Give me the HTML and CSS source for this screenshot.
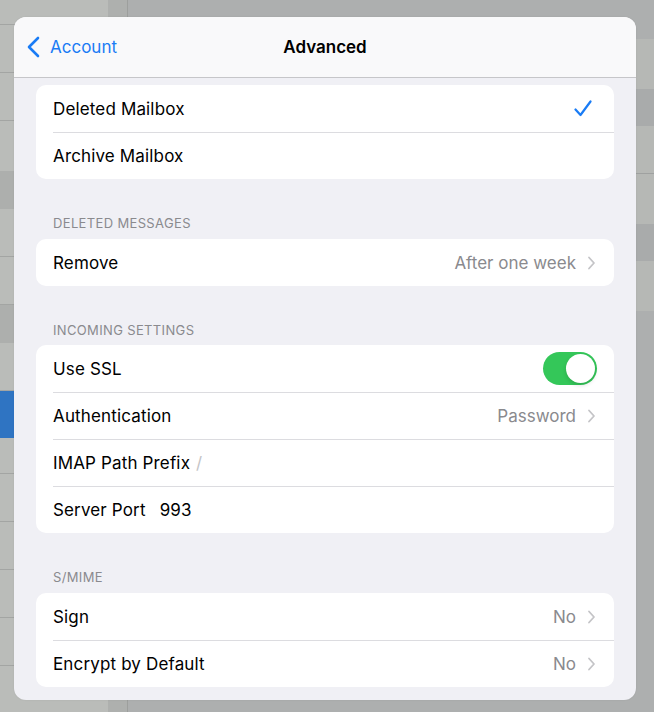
FILE: index.html
```html
<!DOCTYPE html>
<html lang="en">
<head>
    <meta charset="UTF-8">
    <meta name="viewport" content="width=device-width, initial-scale=1.0">
    <title>Advanced</title>
    <link rel="stylesheet" href="styles.css">
</head>
<body>
    <!-- dimmed app behind the sheet -->
    <div class="backdrop">
        <div class="sidebar">
            <div class="side-row top"></div>
            <div class="side-row"></div>
            <div class="side-row"></div>
            <div class="side-row tall"></div>
            <div class="side-row dark"></div>
            <div class="side-row"></div>
            <div class="side-row"></div>
            <div class="side-row dark"></div>
            <div class="side-row"></div>
            <div class="side-row selected"></div>
            <div class="side-row short"></div>
            <div class="side-row"></div>
            <div class="side-row"></div>
            <div class="side-row"></div>
            <div class="side-row"></div>
        </div>
        <div class="gutter"></div>
        <div class="main">
            <div class="main-row gap"></div>
            <div class="main-row light"></div>
            <div class="main-row dim"></div>
            <div class="main-row light split"></div>
            <div class="main-row light"></div>
            <div class="main-row dim"></div>
            <div class="main-row light"></div>
        </div>
    </div>

    <div class="sheet">
        <div class="nav">
            <a class="back">
                <svg width="14" height="22" viewBox="0 0 14 22">
                    <polyline points="11,2 2,11 11,20" fill="none" stroke="#1a7cf5" stroke-width="2.6" stroke-linecap="round" stroke-linejoin="round"/>
                </svg>
                <span>Account</span>
            </a>
            <div class="nav-title">Advanced</div>
        </div>

        <div class="content">
            <div class="group">
                <div class="row"><div class="row-inner">
                    <span class="label">Deleted Mailbox</span>
                    <svg class="check" width="18" height="18" viewBox="0 0 18 18">
                        <polyline points="1.5,9.5 6.5,15 16.5,1.5" fill="none" stroke="#1a7cf5" stroke-width="2.2" stroke-linecap="round" stroke-linejoin="round"/>
                    </svg>
                </div></div>
                <div class="row"><div class="row-inner">
                    <span class="label">Archive Mailbox</span>
                </div></div>
            </div>

            <div class="section-header">Deleted Messages</div>
            <div class="group">
                <div class="row"><div class="row-inner">
                    <span class="label">Remove</span>
                    <span class="value">After one week</span>
                    <svg class="chevron" width="9" height="14" viewBox="0 0 9 14">
                        <polyline points="2,1.5 7,7 2,12.5" fill="none" stroke="#c4c4c7" stroke-width="1.8" stroke-linecap="round" stroke-linejoin="round"/>
                    </svg>
                </div></div>
            </div>

            <div class="section-header tight">Incoming Settings</div>
            <div class="group">
                <div class="row"><div class="row-inner">
                    <span class="label">Use SSL</span>
                    <span class="toggle on"><span class="knob"></span></span>
                </div></div>
                <div class="row"><div class="row-inner">
                    <span class="label">Authentication</span>
                    <span class="value">Password</span>
                    <svg class="chevron" width="9" height="14" viewBox="0 0 9 14">
                        <polyline points="2,1.5 7,7 2,12.5" fill="none" stroke="#c4c4c7" stroke-width="1.8" stroke-linecap="round" stroke-linejoin="round"/>
                    </svg>
                </div></div>
                <div class="row"><div class="row-inner">
                    <span class="label">IMAP Path Prefix</span>
                    <span class="field placeholder">/</span>
                </div></div>
                <div class="row"><div class="row-inner">
                    <span class="label">Server Port</span>
                    <span class="field port">993</span>
                </div></div>
            </div>

            <div class="section-header">S/MIME</div>
            <div class="group">
                <div class="row"><div class="row-inner">
                    <span class="label">Sign</span>
                    <span class="value">No</span>
                    <svg class="chevron" width="9" height="14" viewBox="0 0 9 14">
                        <polyline points="2,1.5 7,7 2,12.5" fill="none" stroke="#c4c4c7" stroke-width="1.8" stroke-linecap="round" stroke-linejoin="round"/>
                    </svg>
                </div></div>
                <div class="row"><div class="row-inner">
                    <span class="label">Encrypt by Default</span>
                    <span class="value">No</span>
                    <svg class="chevron" width="9" height="14" viewBox="0 0 9 14">
                        <polyline points="2,1.5 7,7 2,12.5" fill="none" stroke="#c4c4c7" stroke-width="1.8" stroke-linecap="round" stroke-linejoin="round"/>
                    </svg>
                </div></div>
            </div>
        </div>
    </div>
</body>
</html>
```

FILE: styles.css
```css
* {
    margin: 0;
    padding: 0;
    box-sizing: border-box;
}

body {
    font-family: 'Inter', 'Roboto', sans-serif;
    background: #adafaf;
    width: 654px;
    height: 712px;
    overflow: hidden;
    position: relative;
    color: #000;
}

/* backdrop */
.backdrop {
    display: flex;
    height: 712px;
}

.sidebar {
    width: 108px;
    background: #babcb9;
    display: flex;
    flex-direction: column;
}

.side-row {
    height: 48px;
    border-bottom: 1px solid #a3a5a3;
}

.side-row.top {
    height: 25px;
}

.side-row.tall {
    height: 50px;
    border-bottom: none;
}

.side-row.dark {
    height: 38px;
    background: #adafad;
    border-bottom: none;
}

.side-row.short {
    height: 36px;
}

.side-row.selected {
    height: 47px;
    background: #2f74c2;
    border-bottom: none;
}

.gutter {
    width: 20px;
    background: #aeb0ae;
    border-right: 1px solid #9d9f9d;
}

.main {
    flex: 1;
    display: flex;
    flex-direction: column;
}

.main-row {
    height: 40px;
}

.main-row.gap {
    height: 39px;
}

.main-row.light {
    height: 50px;
    background: #b6b8b5;
}

.main-row.dim {
    height: 37px;
    background: #a9abab;
}

.main-row.split {
    height: 48px;
    border-bottom: 1px solid #9fa1a0;
}

/* sheet */
.sheet {
    position: absolute;
    left: 14px;
    top: 17px;
    width: 622px;
    background: #f0f0f5;
    border-radius: 12px;
    overflow: hidden;
    box-shadow: 0 0 2px rgba(0,0,0,0.08);
}

.nav {
    height: 61px;
    background: #f9f9fa;
    border-bottom: 1px solid #c6c6c9;
    display: flex;
    align-items: center;
    justify-content: center;
    position: relative;
}

.back {
    position: absolute;
    left: 13px;
    top: 19px;
    display: flex;
    align-items: center;
    gap: 9px;
    color: #1a7cf5;
    font-size: 17px;
    letter-spacing: 0;
}

.nav-title {
    font-size: 17px;
    font-weight: 600;
    letter-spacing: 0;
}

.content {
    padding: 7px 22px 13px;
}

.section-header {
    padding: 35px 17px 7px;
    height: 60px;
    font-size: 13px;
    line-height: 18px;
    text-transform: uppercase;
    color: #8a8a8e;
    letter-spacing: 0.35px;
}

.section-header.tight {
    height: 59px;
    padding-bottom: 6px;
}

.group {
    background: #fff;
    border-radius: 10px;
    overflow: hidden;
}

.row {
    padding-left: 17px;
}

.row-inner {
    height: 47px;
    display: flex;
    align-items: center;
    padding-right: 18px;
    font-size: 17px;
    letter-spacing: 0.15px;
}

.row + .row .row-inner {
    border-top: 1px solid #dcdce0;
}

.label {
    flex: none;
}

.value {
    margin-left: auto;
    color: #8a8a8e;
    margin-right: 11px;
    letter-spacing: 0;
}

.check {
    margin-left: auto;
    margin-right: 4px;
}

.field {
    margin-left: 6px;
}

.field.placeholder {
    color: #c4c4c7;
}

.field.port {
    margin-left: 14px;
}

.toggle {
    margin-left: auto;
    width: 54px;
    height: 33px;
    border-radius: 17px;
    background: #34c759;
    padding: 2px;
    display: flex;
    justify-content: flex-end;
    margin-right: -1px;
}

.knob {
    width: 29px;
    height: 29px;
    border-radius: 50%;
    background: #fff;
    box-shadow: 0 2px 4px rgba(0,0,0,0.15);
}
```
